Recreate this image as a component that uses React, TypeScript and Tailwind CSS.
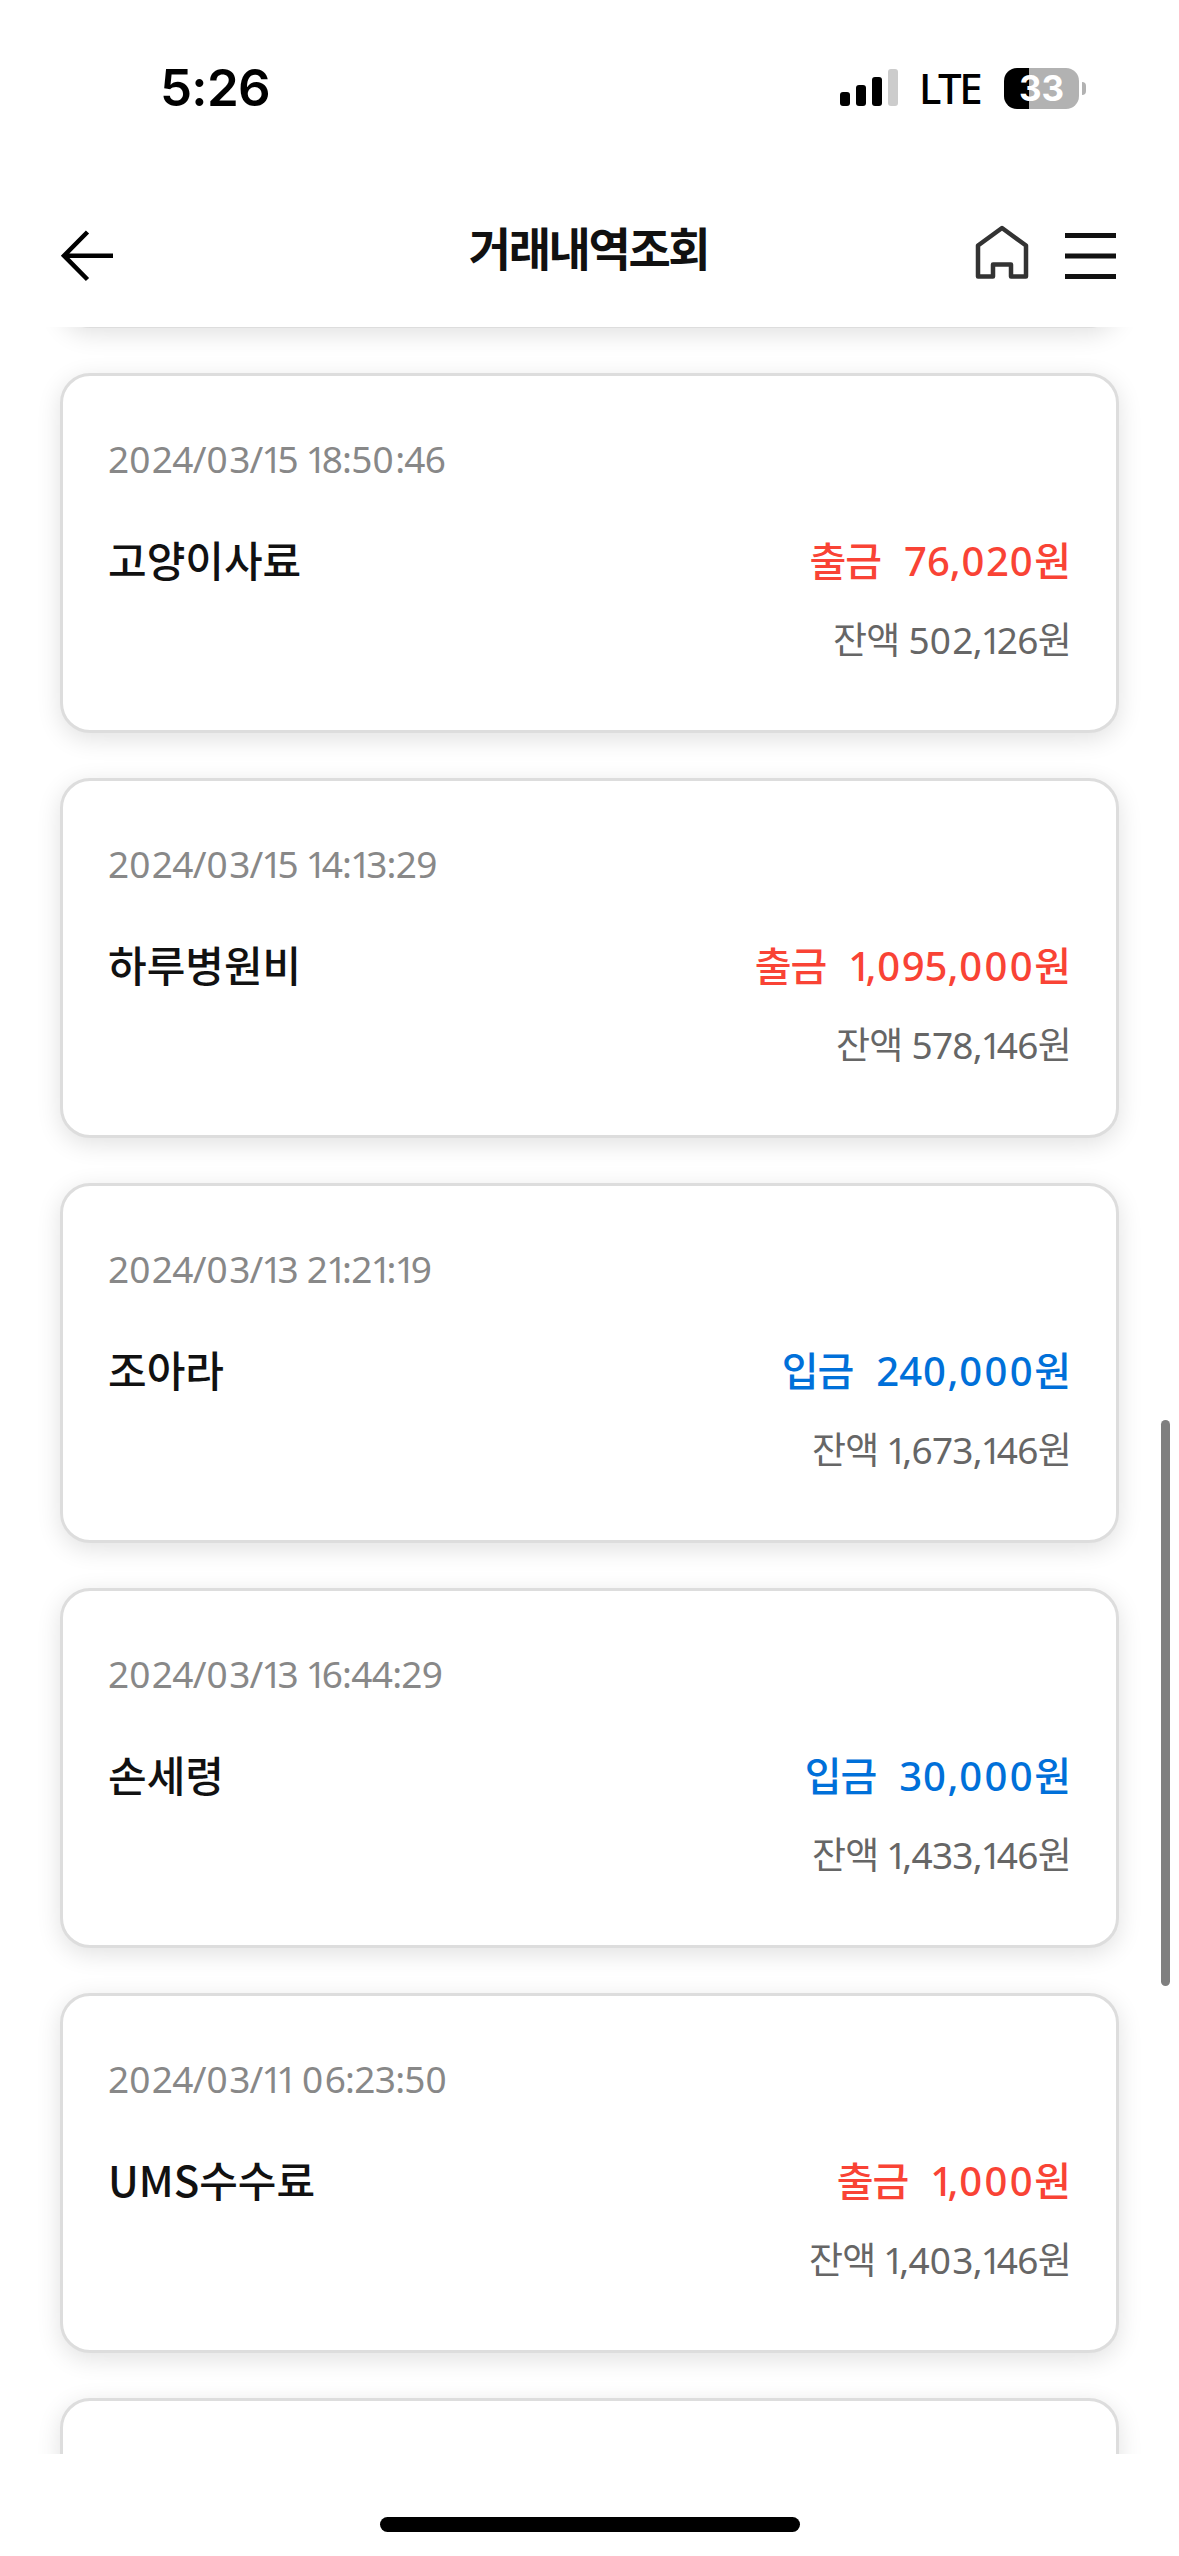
import { Fragment } from "react";

type Transaction = {
  date: string;
  name: string;
  kind: "출금" | "입금";
  amount: string;
  balance: string;
};

const transactions: Transaction[] = [
  { date: "2024/03/15 18:50:46", name: "고양이사료", kind: "출금", amount: "76,020", balance: "502,126" },
  { date: "2024/03/15 14:13:29", name: "하루병원비", kind: "출금", amount: "1,095,000", balance: "578,146" },
  { date: "2024/03/13 21:21:19", name: "조아라", kind: "입금", amount: "240,000", balance: "1,673,146" },
  { date: "2024/03/13 16:44:29", name: "손세령", kind: "입금", amount: "30,000", balance: "1,433,146" },
  { date: "2024/03/11 06:23:50", name: "UMS수수료", kind: "출금", amount: "1,000", balance: "1,403,146" },
];

function Digits({ text }: { text: string }) {
  return (
    <>
      {text.split("").map((char, i) => {
        if (char === "1") return <span key={i} className="-ml-[0.03em] tracking-[-0.14em]">1</span>;
        if (char === "0") return <span key={i} className="ml-[0.02em] tracking-[0.04em]">0</span>;
        return <Fragment key={i}>{char}</Fragment>;
      })}
    </>
  );
}

function StatusBar() {
  return (
    <div className="flex h-[177px] shrink-0 justify-between pl-[160px] pr-[93px] pt-[58px]">
      <span className="font-['Inter'] text-[51px] font-semibold leading-[60px] tracking-[-0.7px]">5:26</span>
      <div className="flex h-[60px] items-center">
        <svg width="58" height="38" viewBox="0 0 58 38">
          <rect x="0" y="23" width="10" height="14" rx="3" />
          <rect x="16" y="16" width="10" height="21" rx="3" />
          <rect x="32" y="8" width="10" height="29" rx="3" />
          <rect x="48" y="0" width="10" height="37" rx="3" fill="#ccc" />
        </svg>
        <span className="ml-[21px] w-[66px] font-['Noto_Sans'] text-[42px] font-medium leading-[60px] tracking-[-2.5px]">LTE</span>
        <div className="ml-[19px] flex items-center gap-[3px]">
          <div className="flex h-[41px] w-[75px] items-center justify-center rounded-[13px] bg-[linear-gradient(90deg,#000_25px,#b2b2b2_25px)]">
            <span className="font-['Inter'] text-[35px] font-bold leading-none text-white">33</span>
          </div>
          <div className="h-[13px] w-[4px] rounded-r-full bg-[#b2b2b2]" />
        </div>
      </div>
    </div>
  );
}

function Header() {
  return (
    <header className="flex h-[150px] shrink-0 items-center justify-between pl-[60px] pr-[62px]">
      <svg width="170" height="60" viewBox="0 0 170 60" fill="none" stroke="#000" strokeWidth="4.5">
        <path d="M27.500 10 4 33.700l23.500 23.800M4 33.700h49" />
      </svg>
      <h1 className="-mt-2 text-[46px] font-bold tracking-[-2.4px] text-[#111]">거래내역조회</h1>
      <div className="flex w-[170px] items-center justify-end gap-[36px]">
        <svg width="54" height="54" viewBox="0 0 54 54" fill="none" stroke="#333" strokeWidth="4.5" strokeLinejoin="round">
          <path d="M27 3 51 20.500V51.500H36V39.500H18V51.500H3V20.500Z" />
        </svg>
        <svg width="52" height="54" viewBox="0 0 52 54" fill="#111">
          <path d="M0 8h51v5H0zM0 28.500h51v5H0zM0 49h51v5H0z" />
        </svg>
      </div>
    </header>
  );
}

const cardClass =
  "h-[360px] shrink-0 rounded-[30px] border-[3px] border-[#ddd] bg-white px-[45px] shadow-[0_6px_24px_rgba(0,0,0,0.12)]";

function TransactionCard({ date, name, kind, amount, balance }: Transaction) {
  return (
    <article className={cardClass}>
      <p className="mt-[53px] text-[37px] leading-[60px] tracking-[-0.02em] text-[#888]">
        <Digits text={date} />
      </p>
      <div className="mt-[37px] flex items-center justify-between font-medium leading-[70px]">
        <h2 className="-mt-[5px] font-['Noto_Sans_CJK_KR'] text-[42px] text-[#111]">{name}</h2>
        <p className={kind === "출금" ? "text-[40px] text-[#f94335]" : "text-[40px] text-[#0070d9]"}>
          <span className="mr-[23px] tracking-[-1px]">{kind}</span>
          <Digits text={amount} />원
        </p>
      </div>
      <p className="mt-[14px] text-right text-[37px] leading-[60px] tracking-[-0.02em] text-[#666]">
        잔액 <Digits text={balance} />원
      </p>
    </article>
  );
}

export default function App() {
  return (
    <div className="relative flex h-[2556px] w-[1179px] flex-col overflow-hidden bg-white font-['Noto_Sans','Noto_Sans_CJK_KR',sans-serif]">
      <StatusBar />
      <Header />
      <main className="h-[2127px] shrink-0 overflow-hidden">
        <div className="-mt-[359px] flex flex-col gap-[45px] px-[60px]">
          <div className={cardClass} />
          {transactions.map((transaction) => (
            <TransactionCard key={transaction.date} {...transaction} />
          ))}
          <div className={cardClass} />
        </div>
      </main>
      <div className="flex flex-1 justify-center pt-[63px]">
        <div className="h-[15px] w-[420px] rounded-full bg-black" />
      </div>
      <div className="absolute right-[9px] top-[1420px] h-[566px] w-[9px] rounded-full bg-[#7f7f7f]" />
    </div>
  );
}
